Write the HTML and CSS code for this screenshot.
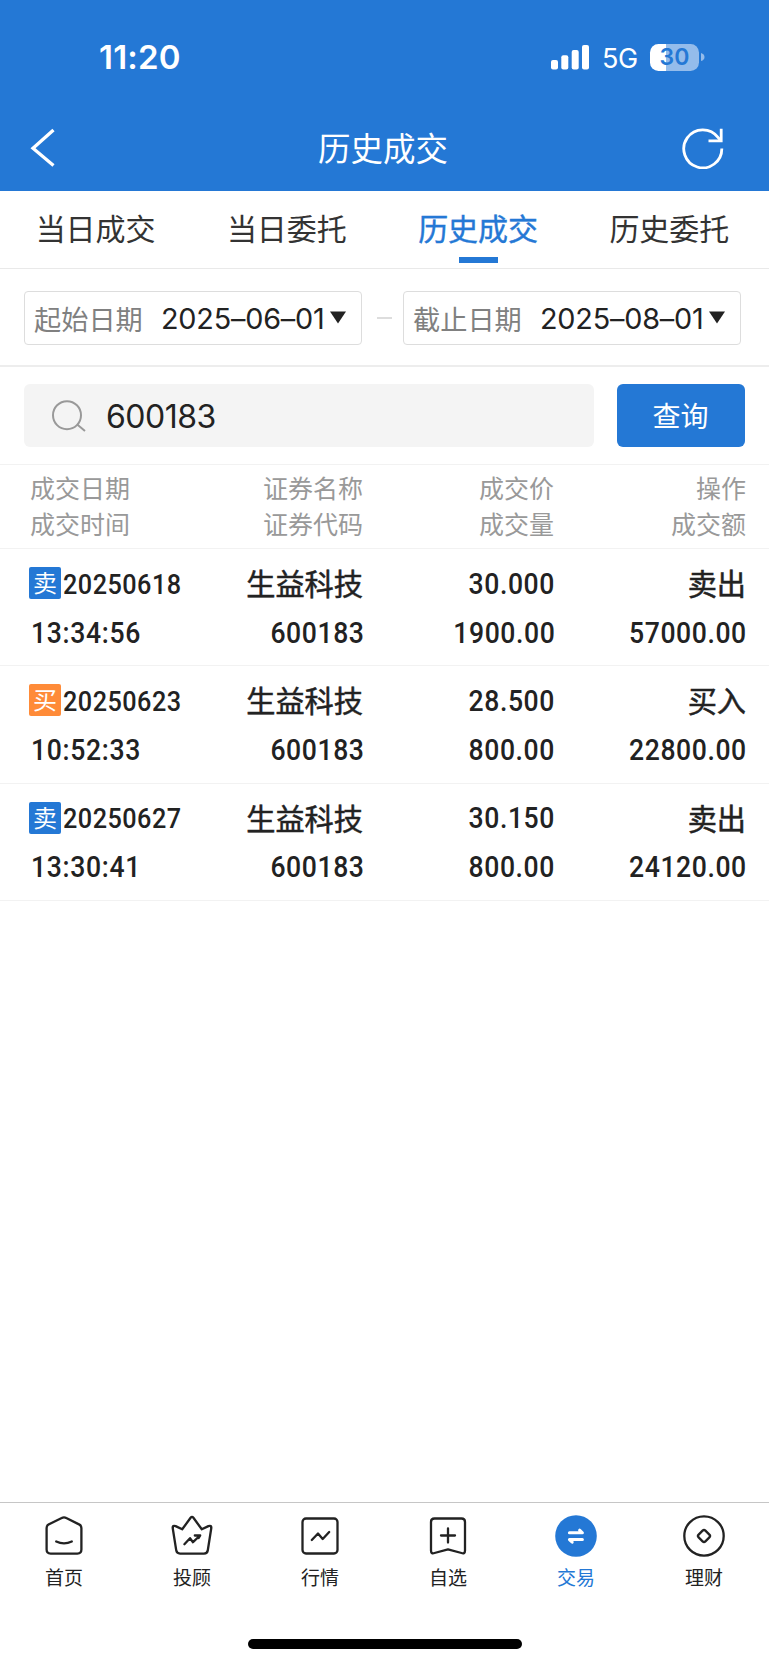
FILE: index.html
```html
<!DOCTYPE html>
<html lang="zh-CN">
<head>
<meta charset="utf-8">
<title>历史成交</title>
<link rel="stylesheet" href="styles.css">
</head>
<body>
<div class="app">
  <header class="header">
    <div class="status">
      <span class="clock">11:20</span>
      <div class="status-right">
        <svg class="signal" width="39" height="25" viewBox="0 0 39 25" fill="#fff"><rect x="0" y="15" width="7" height="9.5" rx="2"/><rect x="10.3" y="10.3" width="7" height="14.2" rx="2"/><rect x="20.7" y="5" width="7" height="19.5" rx="2"/><rect x="31" y="0" width="7" height="24.5" rx="2"/></svg>
        <span class="network">5G</span>
        <div class="battery"><span class="battery-level">30</span></div>
        <svg class="battery-cap" width="4" height="8" viewBox="0 0 4 8"><path d="M0 0Q3.5 1 3.5 4T0 8Z" fill="#94bceb"/></svg>
      </div>
    </div>
    <div class="navbar">
      <svg class="back" width="26" height="40" viewBox="0 0 26 40" fill="none" stroke="#fff"><path d="M23.5 2L3 20.3L23.5 37.5" stroke-width="3.3"/></svg>
      <h1 class="title">历史成交</h1>
      <svg class="refresh" width="42" height="42" viewBox="0 0 42 42" fill="none" stroke="#fff" stroke-width="2.8"><path d="M39.8 21.5A19 19 0 1 1 36 10.4L39 13.8"/><path d="M39.2 1.8V13.8H26.5"/></svg>
    </div>
  </header>

  <nav class="tabs">
    <a class="tab">当日成交</a>
    <a class="tab">当日委托</a>
    <a class="tab active">历史成交</a>
    <a class="tab">历史委托</a>
  </nav>

  <section class="dates">
    <div class="date-box"><span class="date-label">起始日期</span><span class="date-value">2025–06–01</span><svg class="caret" width="16" height="13" viewBox="0 0 16 13"><path d="M0 0.5H16L8 12.5Z" fill="#222"/></svg></div>
    <span class="dash"></span>
    <div class="date-box"><span class="date-label">截止日期</span><span class="date-value">2025–08–01</span><svg class="caret" width="16" height="13" viewBox="0 0 16 13"><path d="M0 0.5H16L8 12.5Z" fill="#222"/></svg></div>
  </section>

  <section class="search">
    <div class="search-field">
      <svg width="34" height="32" viewBox="0 0 34 32" fill="none" stroke="#999" stroke-width="2"><circle cx="15" cy="15.2" r="14"/><path d="M25.2 24.6L33 31"/></svg>
      <span class="search-text">600183</span>
    </div>
    <button class="query">查询</button>
  </section>

  <section class="thead">
    <div class="cell">成交日期<br>成交时间</div>
    <div class="cell right">证券名称<br>证券代码</div>
    <div class="cell right">成交价<br>成交量</div>
    <div class="cell right">操作<br>成交额</div>
  </section>

  <section class="rows">
    <div class="row">
      <div class="line top"><div class="date-cell"><span class="badge sell">卖</span><span class="num small">20250618</span></div><span class="name">生益科技</span><span class="num">30.000</span><span class="name">卖出</span></div>
      <div class="line"><span class="num time">13:34:56</span><span class="num">600183</span><span class="num">1900.00</span><span class="num">57000.00</span></div>
    </div>
    <div class="row">
      <div class="line top"><div class="date-cell"><span class="badge buy">买</span><span class="num small">20250623</span></div><span class="name">生益科技</span><span class="num">28.500</span><span class="name">买入</span></div>
      <div class="line"><span class="num time">10:52:33</span><span class="num">600183</span><span class="num">800.00</span><span class="num">22800.00</span></div>
    </div>
    <div class="row">
      <div class="line top"><div class="date-cell"><span class="badge sell">卖</span><span class="num small">20250627</span></div><span class="name">生益科技</span><span class="num">30.150</span><span class="name">卖出</span></div>
      <div class="line"><span class="num time">13:30:41</span><span class="num">600183</span><span class="num">800.00</span><span class="num">24120.00</span></div>
    </div>
  </section>

  <footer class="footer">
    <div class="tabbar">
      <a class="item"><svg viewBox="0 0 42 42"><path d="M18.7 3Q21 1.6 23.3 3L36.5 9.6Q38.4 10.6 38.4 13V34.6Q38.4 38.6 34.4 38.6H7.6Q3.6 38.6 3.6 34.6V13Q3.6 10.6 5.5 9.6Z"/><path d="M13.2 26.5Q21 30.3 28.8 26.5"/></svg><span>首页</span></a>
      <a class="item"><svg viewBox="0 0 42 42"><path d="M19.6 2.8Q21 1 22.4 2.8L30.8 14.3L37.4 11.1Q40.6 10 40.3 13L36.8 35.2Q36.3 38.6 33 38.6H9Q5.7 38.6 5.2 35.2L1.7 13Q1.4 10 4.6 11.1L11.2 14.3Z"/><path d="M13.4 29.2L19 23.2L22 27.2L29 20.5M23.8 20.5H29.2L27.7 23"/></svg><span>投顾</span></a>
      <a class="item"><svg viewBox="0 0 42 42"><rect x="3.5" y="3.5" width="35" height="35" rx="3.5"/><path d="M12.8 25L19 18.5L23.7 24L30.2 17"/></svg><span>行情</span></a>
      <a class="item"><svg viewBox="0 0 42 42"><path d="M7.5 3.5H34.5Q38 3.5 38 7V35.5Q38 39.2 34.5 38L21 34.3L7.5 38Q4 39.2 4 35.5V7Q4 3.5 7.5 3.5Z"/><path d="M21 13.5V27.5M14 20.5H28"/></svg><span>自选</span></a>
      <a class="item current"><svg viewBox="0 0 42 42"><circle cx="21" cy="21" r="20.8" fill="#2478d5" stroke="none"/><path d="M14.4 17.8H27.4L24.6 15.2M27.4 24.6H14.4L17.2 27.2" stroke="#fff" stroke-width="3"/></svg><span>交易</span></a>
      <a class="item"><svg viewBox="0 0 42 42"><circle cx="21" cy="21" r="19.7"/><rect x="16.2" y="16.2" width="9.6" height="9.6" rx="2" transform="rotate(45 21 21)"/></svg><span>理财</span></a>
    </div>
    <div class="home-indicator"></div>
  </footer>
</div>
</body>
</html>
```
FILE: styles.css
```css
* { box-sizing: border-box; }
body {
  margin: 0;
  background: #fff;
  color: #222;
  font-family: "Noto Sans CJK SC", sans-serif;
}
.app { width: 769px; height: 1665px; display: flex; flex-direction: column; overflow: hidden; }

.header { height: 191px; background: #2478d5; color: #fff; flex: none; }
.status { height: 104px; padding: 10px 64px 0 99px; display: flex; justify-content: space-between; align-items: center; }
.clock { font: 600 33px/40px Inter, sans-serif; letter-spacing: 0.2px; }
.status-right { display: flex; align-items: center; height: 30px; }
.network { font: 400 27px/30px Inter, sans-serif; margin-left: 12px; width: 48px; letter-spacing: -0.5px; padding-top: 3px; }
.battery {
  width: 49px; height: 27px; border-radius: 8.5px;
  background: linear-gradient(to right, #fff 15.5px, #94bceb 15.5px);
  text-align: center;
}
.battery-level { font: 600 23px/27px Inter, sans-serif; color: #2478d5; }
.battery-cap { margin-left: 2px; }
.navbar { height: 87px; padding: 0 45px 0 30px; display: flex; align-items: center; justify-content: space-between; }
.back { margin-right: 16px; }
.title { margin: -1px 0 0 12px; font-size: 32.5px; line-height: 44px; font-weight: 400; }

.tabs { height: 78px; padding-right: 4px; display: grid; grid-template-columns: repeat(4, 1fr); border-bottom: 1px solid #e9e9e9; flex: none; }
.tab { display: flex; flex-direction: column; align-items: center; font-size: 30px; line-height: 40px; padding-top: 16px; color: #333; }
.tab.active { color: #2478d5; -webkit-text-stroke: 0.4px #2478d5; }
.tab.active::after { content: ""; width: 39px; height: 6px; margin-top: 10px; background: #2478d5; }

.dates { height: 98px; padding: 22px 28px 0 24px; display: flex; align-items: flex-start; border-bottom: 2px solid #ededed; flex: none; }
.date-box { width: 338px; height: 54px; border: 1px solid #ddd; border-radius: 4px; display: flex; align-items: center; padding-left: 9px; flex: none; }
.date-label { font-size: 27.2px; color: #808080; width: 127px; line-height: 40px; margin-top: -1px; white-space: nowrap; }
.date-value { font: 400 28.8px/40px Inter, sans-serif; letter-spacing: -0.2px; width: 169px; padding-top: 2px; white-space: nowrap; }
.caret { flex: none; margin-top: -2px; }
.dash { width: 15px; height: 2px; background: #ddd; margin: 26px 11px 0 15px; flex: none; }

.search { height: 98px; padding: 17px 24px 0; display: flex; justify-content: space-between; border-bottom: 1px solid #f2f2f2; flex: none; }
.search-field { width: 570px; height: 63px; border-radius: 6px; background: #f4f4f4; display: flex; align-items: center; padding-left: 28px; }
.search-text { font: 400 32px/40px Inter, sans-serif; margin-left: 20px; letter-spacing: -0.5px; padding-top: 2px; }
.query { width: 128px; height: 63px; border: 0; border-radius: 6px; background: #2478d5; color: #fff; font: 400 28px/40px "Noto Sans CJK SC", sans-serif; padding: 0 1px 1px 0; }

.thead, .line { display: grid; grid-template-columns: 173px 160px 191px 192px; padding-left: 30px; }
.thead { height: 84px; padding-top: 4px; border-bottom: 1px solid #f2f2f2; font-size: 25px; line-height: 36px; color: #999; flex: none; }
.right { text-align: right; }

.row { height: 117.33px; border-bottom: 1px solid #f2f2f2; padding-top: 10px; }
.line { height: 49px; align-items: center; justify-items: end; }
.line > :first-child { justify-self: start; }
.name { font-size: 29.2px; line-height: 44px; -webkit-text-stroke: 0.5px #222; margin-top: -3px; }
.date-cell { display: flex; align-items: center; }
.badge { width: 32px; height: 32px; border-radius: 2px; color: #fff; font-size: 24px; line-height: 29px; text-align: center; margin: -1px 2px 0 -1px; }
.sell { background: #2478d5; }
.buy { background: #ff8b38; }
.num { font: 500 29.5px/40px Roboto, sans-serif; letter-spacing: 0.65px; margin-right: -1px; transform: scaleX(0.9); transform-origin: right center; }
.num.small { font-size: 28px; letter-spacing: 0.55px; padding-top: 2px; transform-origin: left center; }
.num.time { margin-left: 1px; letter-spacing: 0.75px; transform-origin: left center; }

.footer { margin-top: auto; height: 163px; border-top: 1px solid #c6c6c6; flex: none; }
.tabbar { display: grid; grid-template-columns: repeat(6, 1fr); padding: 12px 1px 0 0; }
.item { display: flex; flex-direction: column; align-items: center; font-size: 19px; line-height: 28px; }
.item svg { width: 42px; height: 42px; fill: none; stroke: #222; stroke-width: 2.3; stroke-linecap: round; stroke-linejoin: round; }
.item span { margin-top: 6px; }
.current { color: #2478d5; }
.home-indicator { width: 274px; height: 10px; border-radius: 5px; background: #000; margin: 48px auto 0; }
```
